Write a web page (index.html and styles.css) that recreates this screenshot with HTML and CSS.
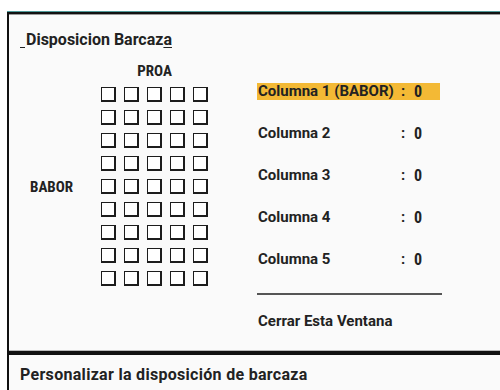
FILE: index.html
```html
<!DOCTYPE html>
<html lang="es">
<head>
  <meta charset="UTF-8" />
  <meta name="viewport" content="width=device-width, initial-scale=1.0"/>
  <title>Disposicion Barcaza</title>
  <link rel="stylesheet" href="styles.css">
</head>
<body>

<div class="window">
  <div class="main">
    <h1 class="title"><span class="lead"></span>Disposicion Barcaz<u>a</u></h1>

    <div class="body">
      <div class="layout">
        <div></div>
        <div class="proa">PROA</div>
        <div class="babor">BABOR</div>
        <div class="slots" id="slots"></div>
      </div>

      <div class="columns">
        <div class="row active"><span class="lbl">Columna 1 (BABOR)</span><span class="colon">:</span><span class="val">0</span></div>
        <div class="row"><span class="lbl">Columna 2</span><span class="colon">:</span><span class="val">0</span></div>
        <div class="row"><span class="lbl">Columna 3</span><span class="colon">:</span><span class="val">0</span></div>
        <div class="row"><span class="lbl">Columna 4</span><span class="colon">:</span><span class="val">0</span></div>
        <div class="row"><span class="lbl">Columna 5</span><span class="colon">:</span><span class="val">0</span></div>
        <hr class="sep">
        <div class="row close">Cerrar Esta Ventana</div>
      </div>
    </div>
  </div>

  <div class="footer">Personalizar la disposición de barcaza</div>
</div>

<script>
  // 9 filas x 5 columnas de huecos
  const slots = document.getElementById("slots");
  for (let i = 0; i < 45; i++) {
    const s = document.createElement("span");
    s.className = "slot";
    slots.appendChild(s);
  }
</script>

</body>
</html>
```

FILE: styles.css
```css
body {
  margin: 0;
  background: #fff;
  overflow: hidden;
  font-family: Roboto, "Liberation Sans", Arial, sans-serif;
  font-weight: bold;
  color: #222;
}
.window {
  margin: 12px 0 0 7px;
  height: 378px;
  box-sizing: border-box;
  border-top: 2px solid #111;
  border-left: 2px solid #111;
  box-shadow: 0 -1px 0 #4f9a9a;
  background: #fafafa;
}
.main {
  height: 337px;
  box-sizing: border-box;
  padding: 16px 0 0 11px;
  border-top: 1px solid #999;
  border-bottom: 1px solid #bbb;
}
.title {
  margin: 0;
  font-size: 16px;
  line-height: 18px;
  font-weight: bold;
}
.title u {
  text-underline-offset: 2px;
}
.lead {
  display: inline-block;
  width: 5px;
  height: 10px;
  margin-right: 1px;
  border-bottom: 1px solid #222;
  vertical-align: -3px;
}
.body {
  display: flex;
  align-items: flex-start;
  margin-top: 13px;
}
.layout {
  display: grid;
  grid-template-columns: 81px auto;
  row-gap: 7px;
}
.proa {
  text-align: center;
  font-size: 15px;
  line-height: 18px;
  font-stretch: 85%;
}
.babor {
  align-self: center;
  padding-left: 10px;
  font-size: 15px;
  font-stretch: 85%;
}
.slots {
  display: grid;
  grid-template-columns: repeat(5, 15px);
  grid-auto-rows: 15px;
  gap: 8px;
}
.slot {
  box-sizing: border-box;
  border: 2px solid #1c1c1c;
  border-top-width: 1.5px;
  border-left-width: 1.5px;
  background: #fff;
}
.columns {
  margin: 21px 0 0 49px;
  display: flex;
  flex-direction: column;
  gap: 25px;
  width: 185px;
}
.row {
  display: flex;
  height: 17px;
  line-height: 17px;
  font-size: 15px;
  font-stretch: 96%;
  padding-left: 1px;
  white-space: nowrap;
}
.row.active {
  background: #f3b935;
  width: 182px;
}
.lbl {
  width: 143px;
}
.colon {
  width: 13px;
}
.val {
  font-size: 16px;
  font-stretch: 78%;
}
.sep {
  margin: 0;
  border: 0;
  border-top: 2px solid #555;
  height: 0;
}
.row.close {
  margin-top: -7px;
}
.footer {
  border-top: 4px solid #111;
  padding: 11px 0 0 11px;
  font-size: 16px;
  line-height: 18px;
  letter-spacing: 0.3px;
}
```
